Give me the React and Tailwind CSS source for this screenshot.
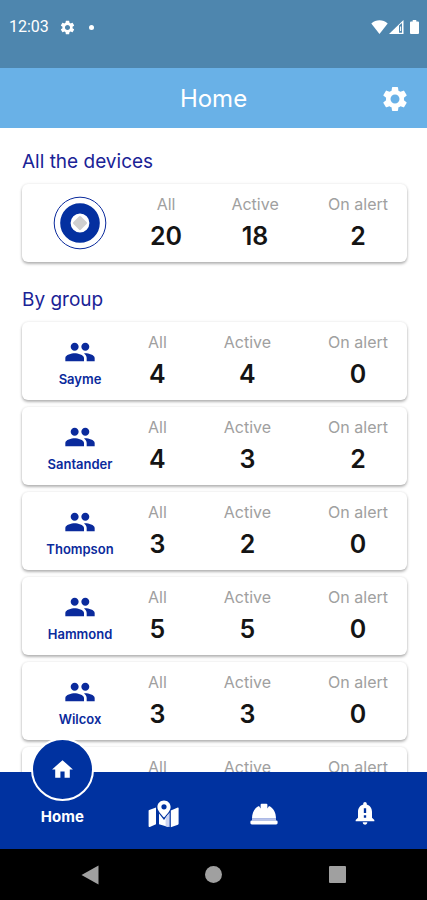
import React from "react";
import { clsx } from "clsx";
import { MdSettings, MdPeople, MdHome, MdNotificationImportant } from "react-icons/md";

const groups = [
  { name: "Sayme", all: 4, active: 4, alert: 0 },
  { name: "Santander", all: 4, active: 3, alert: 2 },
  { name: "Thompson", all: 3, active: 2, alert: 0 },
  { name: "Hammond", all: 5, active: 5, alert: 0 },
  { name: "Wilcox", all: 3, active: 3, alert: 0 },
  { name: "" },
];

function StatusBar() {
  return (
    <div className="flex h-[68px] shrink-0 items-start justify-between bg-[#4e86ae] pt-4 pr-2 pl-[9px] text-white">
      <div className="flex h-[22px] items-center font-['Roboto',sans-serif] text-base">
        <span>12:03</span>
        <MdSettings className="ml-[10px] size-[17px]" />
        <span className="ml-[13px] size-[5px] rounded-full bg-white" />
      </div>
      <div className="flex h-[22px] items-center">
        <svg viewBox="0 0 17 14" className="h-[14px] w-[17px]" fill="currentColor" aria-hidden="true">
          <path d="M0.3 3.6C5 -0.8 12 -0.8 16.7 3.6L8.5 14Z" />
        </svg>
        <svg viewBox="0 0 15 14" className="ml-px h-[14px] w-[15px]" aria-hidden="true">
          <path d="M0 14L14.5 0V14Z" fill="currentColor" />
          <path d="M10 5.5L13 3V12.7H10Z" fill="#4e86ae" />
          <path d="M11.6 6.5V11" stroke="currentColor" strokeWidth="1" />
        </svg>
        <svg viewBox="0 0 9 14" className="ml-[6px] h-[14px] w-[9px]" fill="currentColor" aria-hidden="true">
          <path d="M1 1.5H2.7V0H6.3V1.5H8Q9 1.5 9 2.5V13Q9 14 8 14H1Q0 14 0 13V2.5Q0 1.5 1 1.5Z" />
        </svg>
      </div>
    </div>
  );
}

function Stat({ label, value }) {
  return (
    <div className="flex flex-col items-center">
      <dt className="text-base leading-5 text-[#a0a0a0]">{label}</dt>
      <dd className="mt-2 h-7 text-[25px] leading-7 font-semibold text-[#141414]">{value}</dd>
    </div>
  );
}

function Card({ icon, all, active, alert, total = false }) {
  return (
    <article className="flex h-[78px] rounded-md bg-white shadow-[0_2px_3px_rgba(0,0,0,0.28),0_0_3px_rgba(0,0,0,0.1)]">
      <div className="flex w-[116px] shrink-0 flex-col items-center justify-center text-[#0a2a9c]">{icon}</div>
      <dl className={clsx("flex flex-1 justify-between pt-[10px] pr-[19px]", total ? "pl-3" : "pl-[10px]")}>
        <Stat label="All" value={all} />
        <Stat label="Active" value={active} />
        <Stat label="On alert" value={alert} />
      </dl>
    </article>
  );
}

function DeviceIcon() {
  return (
    <svg viewBox="0 0 54 54" className="size-[54px]" aria-hidden="true">
      <circle cx="27" cy="27" r="25.8" fill="#fff" stroke="#0a2a9c" strokeWidth="1" />
      <circle cx="27" cy="27" r="14.6" fill="#fff" stroke="#0430a0" strokeWidth="10.4" />
      <path d="M27 21.5L32.5 27L27 32.5L21.5 27Z" fill="#cfcfcf" stroke="#cfcfcf" strokeWidth="3" strokeLinejoin="round" />
    </svg>
  );
}

function MapIcon() {
  return (
    <svg viewBox="0 0 31 28" className="h-7 w-[31px]" fill="currentColor" aria-hidden="true">
      <path d="M1.2 9.9L8 7.4V24.3L1.8 26.9Q0.6 27.3 0.6 26V10.8Q0.6 10.1 1.2 9.9Z" />
      <path d="M11 13.4L16 20L20.4 14V27L11 24.3Z" />
      <path d="M17.6 17.8L21.6 12.5V27L17.6 26.2Z" fill="#cdd5f2" />
      <path d="M22.8 10.6L29.8 7.5Q30.6 7.3 30.6 8.3V23.6Q30.6 24.4 29.9 24.7L22.8 27.2Z" />
      <path
        fillRule="evenodd"
        d="M16 0.4C12.3 0.4 9.4 3.3 9.4 6.9C9.4 10.6 13 14.2 16 17.6C19 14.2 22.6 10.6 22.6 6.9C22.6 3.3 19.7 0.4 16 0.4ZM16 4.2A2.6 2.6 0 1 1 16 9.4A2.6 2.6 0 1 1 16 4.2Z"
      />
    </svg>
  );
}

function HardHat() {
  return (
    <svg viewBox="0 0 28 22" className="h-[22px] w-7" fill="currentColor" aria-hidden="true">
      <path d="M2 15.4C2 9.6 4.6 4.8 9 2.9L10.6 5.6V1.8Q10.6 0.8 11.6 0.8H16.4Q17.4 0.8 17.4 1.8V5.6L19 2.9C23.4 4.8 26 9.6 26 15.4Z" />
      <path d="M2 15.2H26V17.6H2Z" fill="#b9c3ea" />
      <rect x="0.4" y="17.4" width="27.2" height="4" rx="1.4" />
    </svg>
  );
}

export default function App() {
  return (
    <div className="flex h-screen flex-col overflow-hidden bg-white font-['Inter',sans-serif]">
      <StatusBar />
      <header className="grid h-[60px] shrink-0 grid-cols-[1fr_auto_1fr] items-center bg-[#69b1e7] px-[17px] pt-px text-white">
        <h1 className="col-start-2 text-2xl leading-7">Home</h1>
        <button type="button" aria-label="Settings" className="justify-self-end">
          <MdSettings className="size-[30px]" />
        </button>
      </header>

      <main className="min-h-0 flex-1 overflow-hidden pr-5 pl-[22px]">
        <h2 className="pt-[22px] text-[19px] leading-6 text-[#1a2396]">All the devices</h2>
        <div className="mt-[10px]">
          <Card icon={<DeviceIcon />} all={20} active={18} alert={2} total />
        </div>
        <h2 className="mt-[26px] text-[19px] leading-6 text-[#1a2396]">By group</h2>
        <div className="mt-[10px] flex flex-col gap-[7px]">
          {groups.map((g) => (
            <Card
              key={g.name}
              icon={
                <>
                  <MdPeople className="size-8" />
                  <span className="mt-[3px] h-4 text-[13px] leading-4 font-semibold">{g.name}</span>
                </>
              }
              all={g.all}
              active={g.active}
              alert={g.alert}
            />
          ))}
        </div>
      </main>

      <nav className="grid h-[77px] shrink-0 grid-cols-4 bg-[#0032a0] px-3 text-white">
        <button type="button" className="relative flex flex-col items-center pt-9">
          <span className="absolute -top-[34px] flex size-[63px] items-center justify-center rounded-full border-2 border-white bg-[#0032a0]">
            <MdHome className="size-[25px]" />
          </span>
          <span className="text-[15px] leading-[18px] font-bold">Home</span>
        </button>
        <button type="button" aria-label="Map" className="flex items-center justify-center pt-[6px]">
          <MapIcon />
        </button>
        <button type="button" aria-label="Works" className="flex items-center justify-center pt-[6px]">
          <HardHat />
        </button>
        <button type="button" aria-label="Alerts" className="flex items-center justify-center pt-1">
          <MdNotificationImportant className="size-7" />
        </button>
      </nav>

      <div className="grid h-[51px] shrink-0 grid-cols-3 bg-black px-7 text-[#a0a0a0]">
        <button type="button" aria-label="Back" className="flex items-center justify-center">
          <svg viewBox="0 0 18 20" className="h-5 w-[18px]" fill="currentColor">
            <path d="M0.5 10L17.5 0.5V19.5Z" />
          </svg>
        </button>
        <button type="button" aria-label="Home screen" className="flex items-center justify-center">
          <span className="size-[17px] rounded-full bg-[#a0a0a0]" />
        </button>
        <button type="button" aria-label="Recent apps" className="flex items-center justify-center">
          <span className="size-[17px] rounded-[1px] bg-[#a0a0a0]" />
        </button>
      </div>
    </div>
  );
}
